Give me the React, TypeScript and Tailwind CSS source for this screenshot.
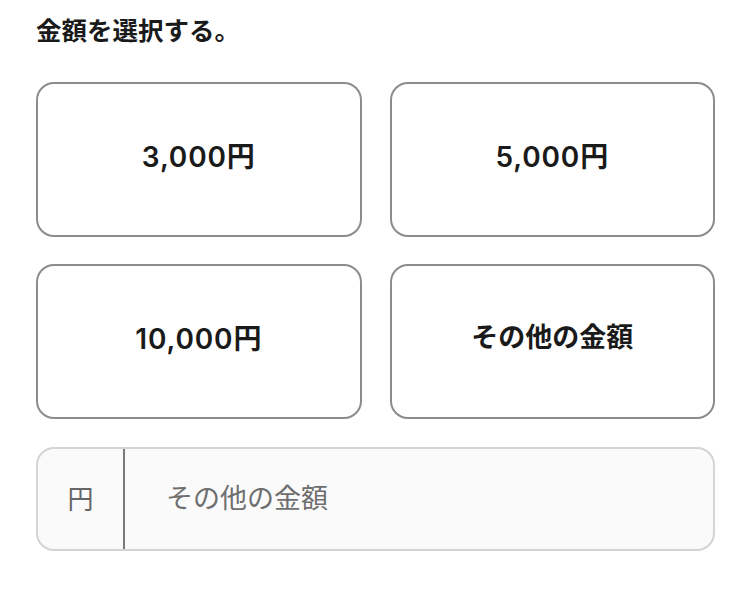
import React, { useState } from 'react';

const amounts = ['3,000円', '5,000円', '10,000円', 'その他の金額'];

export default function App() {
  const [selected, setSelected] = useState<string | null>(null);
  const [custom, setCustom] = useState('');

  return (
    <div
      className="w-[754px] h-[598px] bg-white pl-[36px] pr-[39px] pt-[12px]"
      style={{ fontFamily: 'Inter, "Noto Sans CJK JP", "Noto Sans", sans-serif' }}
    >
      <h2 className="text-[25.5px] font-bold leading-[38px] text-[#1a1a1a]">金額を選択する。</h2>
      <div className="mt-[32px] grid grid-cols-2 gap-x-[28px] gap-y-[27px]">
        {amounts.map((a) => (
          <button
            key={a}
            onClick={() => setSelected(a)}
            className={`h-[155px] pb-[6px] rounded-[18px] border-[2px] border-[#8c8c8c] bg-white text-[#1a1a1a] ${
              a === 'その他の金額' ? 'font-bold text-[27px]' : 'font-semibold text-[28px] tracking-[0.03em]'
            }`}
          >
            {a}
          </button>
        ))}
      </div>
      <div className="mt-[28px] flex h-[104px] rounded-[18px] border-[2px] border-[#d4d4d4] bg-[#fafafa] overflow-hidden">
        <div className="w-[87px] flex items-center justify-center border-r-[2px] border-[#7a7a7a] text-[26px] text-[#666]">
          円
        </div>
        <input
          value={custom}
          onChange={(e) => setCustom(e.target.value)}
          placeholder="その他の金額"
          className="flex-1 bg-transparent pl-[41px] text-[27px] text-[#333] outline-none placeholder:text-[#6e6e6e]"
        />
      </div>
    </div>
  );
}
